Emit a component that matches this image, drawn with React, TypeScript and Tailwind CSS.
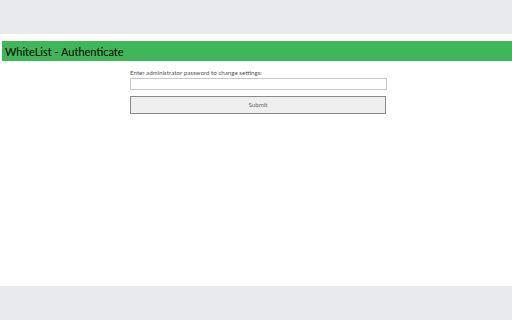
import React from "react";

export default function App() {
  return (
    <div className="w-[512px] h-[320px] flex flex-col bg-white overflow-hidden" style={{ fontFamily: "Lato, 'Noto Sans', sans-serif" }}>
      <div className="h-[34px] bg-[#e9eaee] shrink-0" />
      <div className="flex-1 flex flex-col pt-[7px]">
        <div className="ml-[2px] h-[20px] bg-[#3db757] flex items-center pl-[3px]">
          <span className="text-[11px] text-black leading-none">WhiteList - Authenticate</span>
        </div>
        <div className="w-[256px] ml-[130px] mt-[7px] flex flex-col">
          <div className="text-[6.2px] text-[#555] leading-none h-[10px] flex items-center">Enter administrator password to change settings:</div>
          <input type="password" className="h-[12px] w-[257px] border border-[#c8c8c8] bg-white outline-none" />
          <button className="mt-[6px] h-[18px] w-[256px] bg-[#efefef] border border-[#8a8a8a] text-[6.2px] text-[#666] leading-none">Submit</button>
        </div>
      </div>
      <div className="h-[34px] bg-[#e9eaee] shrink-0" />
    </div>
  );
}
